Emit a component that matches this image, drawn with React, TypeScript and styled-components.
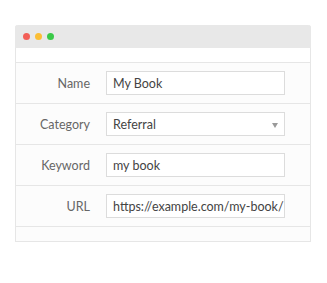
import { createGlobalStyle } from "styled-components";
import styled from "styled-components";

const GlobalStyle = createGlobalStyle`
	html, body {
		margin: 0;
		padding: 0;
		background: #ffffff;
		font-family: Lato, "Open Sans", "Liberation Sans", sans-serif;
	}
`;

const Page = styled.div`
	padding: 25px 0 0 15px;
`;

const Window = styled.div`
	width: 294px;
	border: 1px solid #e6e6e6;
	border-top: none;
	background: #fcfcfc;
	border-radius: 3px 3px 0 0;
`;

const TitleBar = styled.div`
	display: flex;
	align-items: center;
	gap: 5px;
	height: 23px;
	padding-left: 8px;
	background: #e8e8e8;
	border-radius: 3px 3px 0 0;
	margin: 0 -1px;
`;

const Dot = styled.span<{ $color: string }>`
	width: 7px;
	height: 7px;
	border-radius: 50%;
	background: ${(p) => p.$color};
`;

const Spacer = styled.div`
	height: 14px;
	background: #ffffff;
`;

const Row = styled.div`
	display: grid;
	grid-template-columns: 74px 179px;
	column-gap: 16px;
	align-items: center;
	padding: 8px 0;
	border-top: 1px solid #e6e6e6;
`;

const Label = styled.label`
	text-align: right;
	font-size: 12.5px;
	color: #666666;
`;

const Field = styled.div`
	position: relative;
	box-sizing: border-box;
	height: 24px;
	display: flex;
	align-items: center;
	padding: 0 6px;
	border: 1px solid #dcdcdc;
	background: #ffffff;
	font-size: 12.5px;
	color: #444444;
	white-space: nowrap;
	overflow: hidden;
`;

const Caret = styled.span`
	position: absolute;
	right: 6px;
	top: 10px;
	width: 0;
	height: 0;
	border-left: 3.5px solid transparent;
	border-right: 3.5px solid transparent;
	border-top: 5px solid #9a9a9a;
`;

const Footer = styled.div`
	height: 14px;
	border-top: 1px solid #e6e6e6;
`;

const fields = [
	{ label: "Name", value: "My Book" },
	{ label: "Category", value: "Referral", select: true },
	{ label: "Keyword", value: "my book" },
	{ label: "URL", value: "https://example.com/my-book/" },
];

export default function App() {
	return (
		<>
			<GlobalStyle />
			<Page>
				<Window>
					<TitleBar>
						<Dot $color="#f25f58" />
						<Dot $color="#fbbe35" />
						<Dot $color="#3ac948" />
					</TitleBar>
					<Spacer />
					{fields.map((f) => (
						<Row key={f.label}>
							<Label>{f.label}</Label>
							<Field>
								{f.value}
								{f.select && <Caret />}
							</Field>
						</Row>
					))}
					<Footer />
				</Window>
			</Page>
		</>
	);
}
